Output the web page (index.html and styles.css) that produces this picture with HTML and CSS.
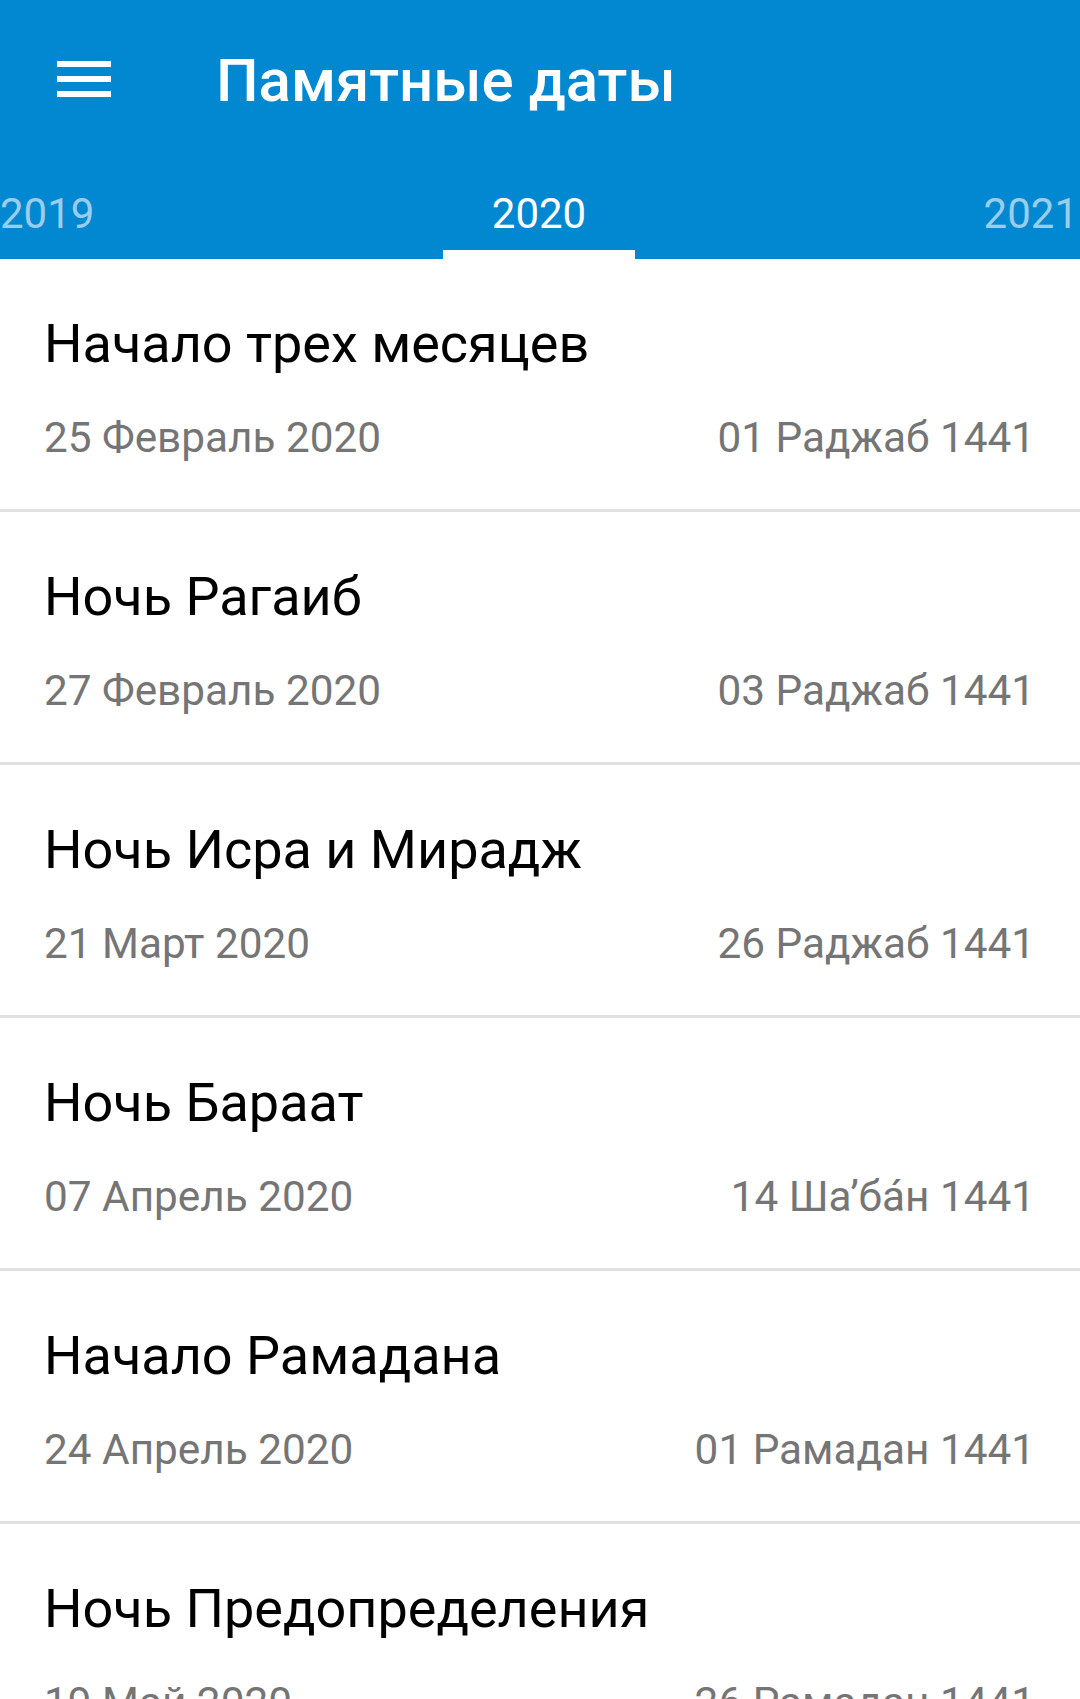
FILE: index.html
```html
<!DOCTYPE html>
<html lang="ru">
<head>
<meta charset="utf-8">
<title>Памятные даты</title>
<link rel="stylesheet" href="styles.css">
</head>
<body>
<div class="app">
  <header class="appbar">
    <div class="toolbar">
      <svg class="menu-icon" width="72" height="72" viewBox="0 0 72 72" aria-hidden="true">
        <rect x="9" y="18" width="54" height="6" fill="#fff"/>
        <rect x="9" y="33" width="54" height="6" fill="#fff"/>
        <rect x="9" y="48" width="54" height="6" fill="#fff"/>
      </svg>
      <h1 class="title">Памятные даты</h1>
    </div>
    <nav class="tabs">
      <span class="tab tab-side">2019</span>
      <span class="tab tab-current">2020</span>
      <span class="tab tab-side">2021</span>
    </nav>
  </header>
  <main class="list">
    <div class="item">
      <div class="item-title">Начало трех месяцев</div>
      <div class="item-dates"><span>25 Февраль 2020</span><span>01 Раджаб 1441</span></div>
    </div>
    <div class="item">
      <div class="item-title">Ночь Рагаиб</div>
      <div class="item-dates"><span>27 Февраль 2020</span><span>03 Раджаб 1441</span></div>
    </div>
    <div class="item">
      <div class="item-title">Ночь Исра и Мирадж</div>
      <div class="item-dates"><span>21 Март 2020</span><span>26 Раджаб 1441</span></div>
    </div>
    <div class="item">
      <div class="item-title">Ночь Бараат</div>
      <div class="item-dates"><span>07 Апрель 2020</span><span>14 Ша’ба́н 1441</span></div>
    </div>
    <div class="item">
      <div class="item-title">Начало Рамадана</div>
      <div class="item-dates"><span>24 Апрель 2020</span><span>01 Рамадан 1441</span></div>
    </div>
    <div class="item">
      <div class="item-title">Ночь Предопределения</div>
      <div class="item-dates"><span>19 Май 2020</span><span>26 Рамадан 1441</span></div>
    </div>
  </main>
</div>
</body>
</html>
```
FILE: styles.css
```css
html, body {
  margin: 0;
  padding: 0;
  background: #ffffff;
}
body {
  font-family: Roboto, "Noto Sans", "Liberation Sans", sans-serif;
  overflow: hidden;
}
.app {
  width: 1080px;
  height: 1699px;
  overflow: hidden;
}
.appbar {
  background: #0288d1;
  height: 259px;
  display: flex;
  flex-direction: column;
}
.toolbar {
  height: 158px;
  display: flex;
  align-items: flex-start;
}
.menu-icon {
  display: block;
  margin: 43px 0 0 48px;
  flex: none;
}
.title {
  margin: 46px 0 0 96px;
  font-size: 60px;
  line-height: 70px;
  font-weight: 500;
  color: #ffffff;
}
.tabs {
  height: 101px;
  display: flex;
  justify-content: space-between;
  align-items: flex-end;
  padding: 0 2px 0 0;
}
.tab {
  font-size: 42px;
  line-height: 50px;
  font-weight: 400;
}
.tab-side {
  color: rgba(255, 255, 255, 0.6);
  padding-bottom: 20px;
}
.tab-current {
  color: #ffffff;
  width: 192px;
  text-align: center;
  padding-bottom: 11px;
  border-bottom: 9px solid #ffffff;
}
.item {
  padding: 52px 45px 46px 44px;
  border-bottom: 3px solid #e0e0e0;
}
.item-title {
  font-size: 54px;
  line-height: 66px;
  color: #000000;
  white-space: nowrap;
}
.item-dates {
  margin-top: 36px;
  display: flex;
  justify-content: space-between;
  font-size: 42.3px;
  line-height: 50px;
  color: #757575;
  white-space: nowrap;
}
```
